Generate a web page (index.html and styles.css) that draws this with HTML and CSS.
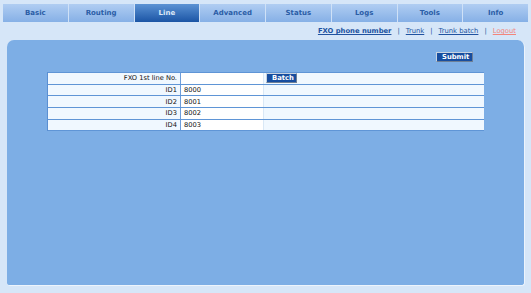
FILE: index.html
```html
<!DOCTYPE html>
<html>
<head>
<meta charset="utf-8">
<link rel="stylesheet" href="styles.css">
</head>
<body>
<div class="tabs">
  <div class="tab">Basic</div>
  <div class="tab">Routing</div>
  <div class="tab active">Line</div>
  <div class="tab">Advanced</div>
  <div class="tab">Status</div>
  <div class="tab">Logs</div>
  <div class="tab">Tools</div>
  <div class="tab">Info</div>
</div>
<div class="links">
  <a class="cur" href="#">FXO phone number</a><span class="sep">|</span><a href="#">Trunk</a><span class="sep">|</span><a href="#">Trunk batch</a><span class="sep">|</span><a class="logout" href="#">Logout</a>
</div>
<div class="panel">
  <div class="submit-row"><button class="btn">Submit</button></div>
  <table class="grid">
    <tr><td class="lbl">FXO 1st line No.</td><td class="val"><span class="input"></span></td><td class="rest"><button class="btn batch">Batch</button></td></tr>
    <tr><td class="lbl">ID1</td><td class="val">8000</td><td class="rest"></td></tr>
    <tr><td class="lbl">ID2</td><td class="val">8001</td><td class="rest"></td></tr>
    <tr><td class="lbl">ID3</td><td class="val">8002</td><td class="rest"></td></tr>
    <tr><td class="lbl">ID4</td><td class="val">8003</td><td class="rest"></td></tr>
  </table>
</div>
</body>
</html>
```
FILE: styles.css
```css
html, body {
  margin: 0;
  padding: 0;
  background: #d6e6f8;
  font-family: "DejaVu Sans", Verdana, sans-serif;
}
.tabs {
  display: flex;
  margin: 4px 3px 0 3px;
  height: 18px;
}
.tab {
  flex: 1;
  display: flex;
  align-items: center;
  justify-content: center;
  font-size: 7px;
  font-weight: bold;
  color: #2b5da6;
  background: linear-gradient(#b0cdf2, #86b0e6);
  border-right: 1px solid #cfe1f7;
}
.tab:last-child { border-right: none; }
.tab.active {
  background: linear-gradient(#5b92d4, #1b55a5);
  color: #dce8f8;
}
.links {
  height: 18px;
  display: flex;
  justify-content: flex-end;
  align-items: center;
  padding-right: 15px;
  font-size: 6.8px;
}
.links a {
  color: #2052a0;
  text-decoration: underline;
}
.links a.cur { font-weight: bold; font-size: 6.8px; }
.links a.logout { color: #f2857b; }
.links .sep {
  color: #2052a0;
  margin: 0 6px;
}
.panel {
  margin: 0 6px 0 7px;
  height: 246px;
  background: #7daee5;
  border-radius: 7px 7px 3px 3px;
  border-right: 1px solid #edf4fc;
  border-bottom: 1px solid #edf4fc;
  box-sizing: border-box;
}
.submit-row {
  display: flex;
  justify-content: flex-end;
  padding: 12px 51px 0 0;
  height: 20px;
  box-sizing: content-box;
}
.btn {
  font-family: "DejaVu Sans", Verdana, sans-serif;
  font-size: 6.8px;
  font-weight: bold;
  color: #fff;
  background: #174d9f;
  border: 1px solid #c8d3e0;
  border-right-color: #6e7f95;
  border-bottom-color: #6e7f95;
  padding: 0 5px;
  height: 10px;
  line-height: 8px;
  margin: 0;
}
.submit-row .btn { width: 37px; }
.grid {
  margin-left: 40px;
  width: 437px;
  border-collapse: separate;
  border-spacing: 0 1px;
  background: #5f95d6;
  border-left: 1px solid #5a8fd2;
  font-size: 6.7px;
  color: #111;
}
.grid td {
  background: #f0f8ff;
  height: 10.7px;
  padding: 0 3px;
  box-sizing: border-box;
}
.grid td.lbl {
  width: 133px;
  text-align: right;
  border-right: 1px solid #6d9ddb;
}
.grid td.val {
  width: 83px;
  background: #fff;
  border-right: 1px solid #d9e8f6;
}
.grid td.rest { padding-left: 2px; }
.input {
  display: block;
  height: 10px;
  background: #fff;
}
.batch { width: 31px; }
```
